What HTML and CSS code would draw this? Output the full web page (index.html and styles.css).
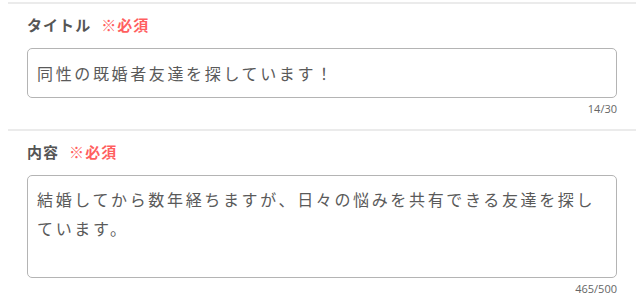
FILE: index.html
```html
<!DOCTYPE html>
<html lang="ja">
<head>
<meta charset="utf-8">
<link rel="stylesheet" href="styles.css">
</head>
<body>
<div class="form">
  <section class="field">
    <div class="label">タイトル<span class="req">※必須</span></div>
    <input class="input" type="text" value="同性の既婚者友達を探しています！">
    <div class="counter">14/30</div>
  </section>
  <section class="field">
    <div class="label">内容<span class="req">※必須</span></div>
    <textarea class="textarea">結婚してから数年経ちますが、日々の悩みを共有できる友達を探しています。</textarea>
    <div class="counter">465/500</div>
  </section>
</div>
</body>
</html>
```
FILE: styles.css
```css
html, body {
  margin: 0;
  padding: 0;
  background: #fff;
}
body {
  font-family: "Noto Sans CJK JP", "Noto Sans", sans-serif;
  color: #555;
}
.form {
  margin: 2px 4px 0 8px;
}
.field {
  border-top: 2px solid #ebebeb;
  padding: 11px 19px 13px;
  display: flex;
  flex-direction: column;
}
.label {
  font-size: 15px;
  line-height: 20px;
  font-weight: bold;
  color: #555;
  letter-spacing: 0.07em;
  margin-bottom: 13px;
}
.req {
  color: #ff5f5f;
  margin-left: 10px;
}
.input,
.textarea {
  box-sizing: border-box;
  width: 100%;
  border: 1px solid #b4b4b4;
  border-radius: 5px;
  font-family: "Noto Sans CJK JP", "Noto Sans", sans-serif;
  font-size: 16px;
  letter-spacing: 0.165em;
  color: #5a5a5a;
  background: #fff;
  margin: 0;
  outline: none;
}
.input {
  height: 50px;
  padding: 0 9px;
}
.textarea {
  height: 103px;
  padding: 9px 9px;
  line-height: 29px;
  resize: none;
  overflow: hidden;
  display: block;
}
.counter {
  font-family: "Open Sans", sans-serif;
  font-size: 11px;
  line-height: 14px;
  color: #666;
  text-align: right;
  margin-top: 4px;
}
```
